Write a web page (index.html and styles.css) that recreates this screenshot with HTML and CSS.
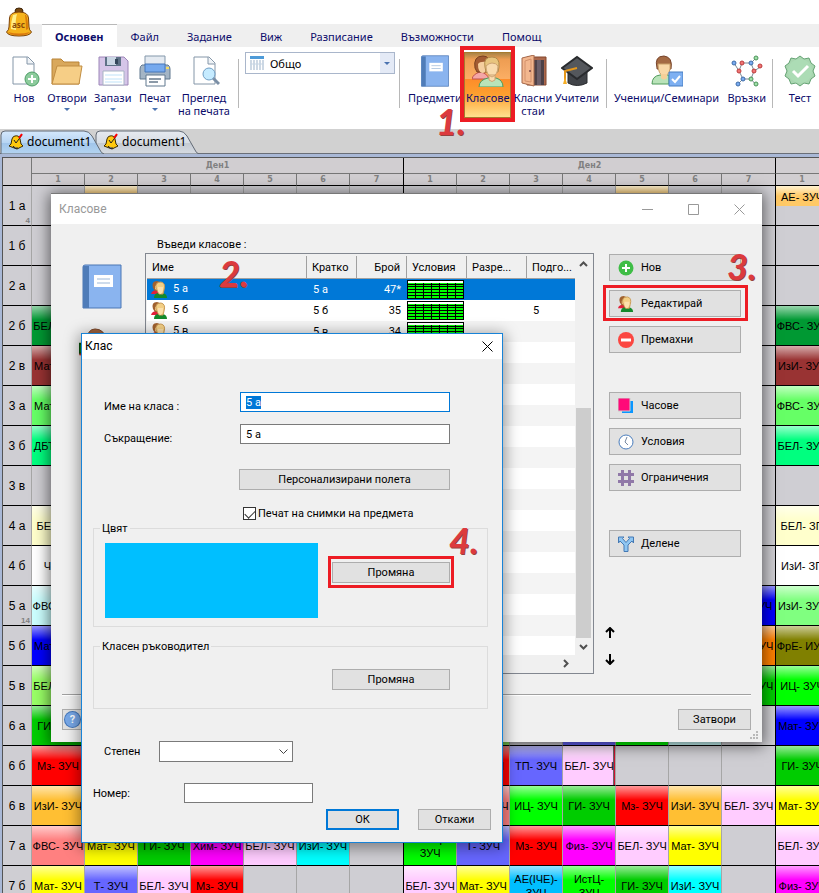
FILE: index.html
```html
<!DOCTYPE html>
<html lang="bg">
<head>
<meta charset="UTF-8" />
<meta name="viewport" content="width=device-width, initial-scale=1" />
<title>Класове</title>
<link rel="stylesheet" href="styles.css">
</head>
<body>

<!-- Shared icons -->
<svg class="sprite" aria-hidden="true">
  <symbol id="bell" viewBox="0 0 26 30">
    <ellipse cx="13" cy="4" rx="4" ry="3" fill="#7a4a12" stroke="#3d2408"/>
    <path d="M3.500 11Q4 5 13 5Q22 5 22.500 11L23 20Q23 23 25.500 25Q24 29 13 29Q2 29 .5 25Q3 23 3 20Z" fill="#f6b31c" stroke="#7d4107"/>
    <path d="M7 8Q5 14 5 22L10 23Q9 13 11 7Z" fill="#fff08a"/>
    <path d="M19 8Q20 15 20 23L22 22Q22 12 20 8Z" fill="#d97b08"/>
    <path d="M2 25Q13 28 24 25Q22 28 13 28.500Q4 28 2 25Z" fill="#d9780f"/>
  </symbol>
  <symbol id="bell-small" viewBox="0 0 16 17">
    <path d="M7 3Q11 2 12 6L13 11L15 13L9 16L1 13L3 11L4 6Q5 3 7 3Z" fill="#ffc90e" stroke="#3b2b00"/>
    <path d="M5 13Q7 17 10 15" fill="#777" stroke="#222"/>
    <path d="M6 7L8 10L14 2" fill="none" stroke="#222"/>
    <path d="M11 5L14 1" stroke="#f00" stroke-width="2"/>
  </symbol>
  <symbol id="book" viewBox="0 0 40 45">
    <path d="M1 3Q1 1 3 1H39V44H1Z" fill="#8ab4ef" stroke="#4a76b4"/>
    <path d="M1 2H7V44H1Z" fill="#4f7cb8"/>
    <path d="M12 11H31V23H12Z" fill="#fff"/>
    <path d="M15 15H28M15 19H28" stroke="#9db8d8"/>
  </symbol>
  <symbol id="people" viewBox="0 0 32 32">
    <path d="M0 24Q1 19 8 17Q15 18 17 24Z" fill="#f4a6a6" stroke="#c0504d"/>
    <path d="M3 13Q1 1 11 1Q19 1 18 12L17 17H5Z" fill="#a35c33" stroke="#7a4020"/>
    <path d="M6 9Q8 6 15 7V13Q14 18 10 18Q6 17 6 9Z" fill="#f5cf9f"/>
    <path d="M7 32Q7 25 16 23H24Q31 25 31 32Z" fill="#b9e3b9" stroke="#4f9a5a"/>
    <path d="M13 12Q11 2 20 2Q28 2 27 12L26 17H14Z" fill="#e8c57e" stroke="#b08a4a"/>
    <path d="M14 11Q17 8 20 8Q24 8 26 11Q26 20 20 22Q14 20 14 11ZM17 20H23V25Q20 28 17 25Z" fill="#f9dbae" stroke="#cda271"/>
  </symbol>
  <symbol id="people-small" viewBox="0 0 17 17">
    <path d="M0 13Q1 9 6 9L9 13Z" fill="#e3203a"/>
    <path d="M2 7Q0 0 6 0Q11 1 10 7L8 10H4Z" fill="#a0612f"/>
    <path d="M4 5H9V9Q6 10 4 8Z" fill="#f6c890"/>
    <path d="M3 17Q3 12 8 12H12Q16 13 16 17Z" fill="#148a2c"/>
    <path d="M5 7Q4 1 10 1Q15 2 13 9L12 13H8Z" fill="#f3cf85" stroke="#c99a55"/>
    <path d="M7 6H12V9Q11 13 9 13Q6 11 7 6Z" fill="#fce0ac"/>
  </symbol>
</svg>

<header class="app-header">
  <div class="title-strip"><svg class="app-bell" aria-hidden="true"><use href="#bell"/></svg><span class="bell-text">asc</span></div>
  <nav class="ribbon-tabs">
    <a class="ribbon-tab active" href="#">Основен</a>
    <a class="ribbon-tab" href="#">Файл</a>
    <a class="ribbon-tab" href="#">Задание</a>
    <a class="ribbon-tab" href="#">Виж</a>
    <a class="ribbon-tab" href="#">Разписание</a>
    <a class="ribbon-tab" href="#">Възможности</a>
    <a class="ribbon-tab" href="#">Помощ</a>
  </nav>

  <div class="ribbon">
    <div class="group group-file">
      <button class="tool" type="button">
        <svg viewBox="0 0 32 32"><path d="M5 2H20L26 8V29H5Z" fill="#fff" stroke="#8496a8"/><path d="M19 2V9H26" fill="#eef2f6" stroke="#8496a8"/><circle cx="24" cy="24" r="7" fill="#8ccb9c" stroke="#4d9d66"/><path d="M24 20V28M20 24H28" stroke="#fff" stroke-width="2"/></svg>
        Нов
      </button>
      <button class="tool drop" type="button">
        <svg viewBox="0 0 32 32"><path d="M1 4H10L13 7H28V29H1Z" fill="#d9a85c" stroke="#b98336"/><path d="M1 29L6 11H31L28 29Z" fill="#f6ce86" stroke="#c18d42"/></svg>
        Отвори
      </button>
      <button class="tool drop" type="button">
        <svg viewBox="0 0 32 32"><path d="M2 2H27L31 6V30H2Z" fill="#d5c5e8" stroke="#9d86b8"/><path d="M8 2H24V11H8Z" fill="#5e7186"/><path d="M10 2H19V10H10Z" fill="#c9d6e4"/><path d="M18 4H21V9H18Z" fill="#34465a"/><path d="M6 16H27V30H6Z" fill="#fff" stroke="#a7b3c4"/><path d="M8 20H25M8 24H25M8 27H25" stroke="#bfe2f8"/></svg>
        Запази
      </button>
      <button class="tool drop" type="button">
        <svg viewBox="0 0 32 32"><path d="M6 1H26V10H6Z" fill="#e4eaf1" stroke="#8397aa"/><path d="M3 10H29Q31 11 31 14V24H1V14Q1 11 3 10Z" fill="#a4b5c5" stroke="#60788f"/><path d="M6 9H26V17H6Z" fill="#75a9ee" stroke="#4677b9"/><path d="M7 20H26V31H7Z" fill="#fff" stroke="#60788f"/><path d="M10 24H22M10 27H19" stroke="#8c9aa8" stroke-width="2"/><path d="M27 13H30" stroke="#f5dd63" stroke-width="2"/></svg>
        Печат
      </button>
      <button class="tool" type="button">
        <svg viewBox="0 0 32 32"><path d="M6 2H21L27 8V29H6Z" fill="#fff" stroke="#8496a8"/><path d="M20 2V9H27" fill="#eef2f6" stroke="#8496a8"/><path d="M25 23L31 29" stroke="#7b8fa6" stroke-width="3"/><circle cx="21" cy="19" r="6" fill="#c5ebff" stroke="#709ec4"/></svg>
        Преглед<br>на печата
      </button>
    </div>

    <div class="group group-view">
      <div class="combo">
        <svg viewBox="0 0 14 14"><path d="M0 0H14V14H0Z" fill="#fff"/><path d="M0 0H14V3H0Z" fill="#4e9bd8"/><path d="M1 4V14M4 4V14M7 4V14M10 4V14M13 4V14" stroke="#9bb1c9"/><path d="M0 8H14" stroke="#c6d5e4"/></svg>
        <select aria-label="Изглед"><option>Общо</option></select>
      </div>
    </div>

    <div class="group group-data">
      <button class="tool" type="button">
        <svg><use href="#book"/></svg>
        Предмети
      </button>
      <button class="tool pressed" type="button">
        <svg><use href="#people"/></svg>
        Класове
      </button>
      <button class="tool" type="button">
        <svg viewBox="0 0 32 32"><path d="M10 2H29V30H10Z" fill="#ab684d" stroke="#84462d"/><path d="M13 5H27V30H13Z" fill="#4d4148"/><path d="M20 5H24V30H20Z" fill="#6b5e69"/><path d="M5 3L17 0V31L5 28Z" fill="#f3b78f" stroke="#a5684a"/><path d="M8 6L14 4V27L8 26Z" fill="none" stroke="#d2916c"/><circle cx="13" cy="16" r="1" fill="#744"/></svg>
        Класни<br>стаи
      </button>
      <button class="tool" type="button">
        <svg viewBox="0 0 32 32"><path d="M7 14H26V28Q16 33 7 28Z" fill="#414449" stroke="#292b2e"/><path d="M1 13L16 2L31 13L16 24Z" fill="#54575c" stroke="#292b2e" stroke-width="2"/><path d="M16 13L4 16V25" fill="none" stroke="#e5971b" stroke-width="2"/><path d="M4 22L6 29H2Z" fill="#f5ae27"/></svg>
        Учители
      </button>
    </div>

    <div class="group group-students">
      <button class="tool" type="button">
        <svg viewBox="0 0 32 32"><path d="M1 29Q1 21 9 20H18V29Z" fill="#b9e3b9" stroke="#4f9a5a"/><path d="M6 13Q3 1 13 1Q22 2 20 14H6Z" fill="#a46a43" stroke="#76432a"/><path d="M7 9H19Q20 20 13 21Q7 20 7 9Z" fill="#f9d8a7" stroke="#c9a06b"/><path d="M10 19H16V23Q13 26 10 23Z" fill="#f5cf98"/><path d="M18 17H32V31H18Z" fill="#7eb0f2" stroke="#477dc1"/><path d="M21 24L24 27L29 21" fill="none" stroke="#fff" stroke-width="2"/></svg>
        Ученици/Семинари
      </button>
      <button class="tool" type="button">
        <svg viewBox="0 0 32 32"><path d="M3 8L8 16L12 24L6 30M8 16L11 8H20L25 3M20 8L23 16L31 11M12 24H20L25 30M23 16L20 24" fill="none" stroke="#7c8995"/><g fill="#78aaf0" stroke="#3e6ca8"><circle cx="3" cy="8" r="2"/><circle cx="12" cy="24" r="2"/><circle cx="7" cy="29" r="2"/><circle cx="20" cy="8" r="2"/></g><g fill="#ef7474" stroke="#bd3c3c"><circle cx="11" cy="8" r="2"/><circle cx="8" cy="16" r="2"/><circle cx="23" cy="16" r="2"/><circle cx="29" cy="11" r="2"/></g><g fill="#9ee0a8" stroke="#4c9259"><circle cx="25" cy="3" r="2"/><circle cx="20" cy="24" r="2"/><circle cx="25" cy="29" r="2"/></g></svg>
        Връзки
      </button>
    </div>

    <div class="group group-test">
      <button class="tool" type="button">
        <svg viewBox="0 0 32 32"><path d="M16 1L20 4L25 3L27 8L31 11L29 16L31 21L27 24L25 29L20 28L16 31L12 28L7 29L5 24L1 21L3 16L1 11L5 8L7 3L12 4Z" fill="#a9d6b0" stroke="#65a374"/><circle cx="16" cy="16" r="12" fill="#acdcb5"/><path d="M9 16L14 21L24 11" fill="none" stroke="#fff" stroke-width="3"/></svg>
        Тест
      </button>
    </div>
  </div>

  <nav class="doc-tabs">
    <a class="doc-tab current" href="#">
      <svg class="tab-shape" viewBox="0 0 104 24"><defs><linearGradient id="tabBlue" x2="0" y2="1"><stop offset="0" stop-color="#d4e8fc"/><stop offset=".5" stop-color="#b7d5f3"/><stop offset=".5" stop-color="#9fc4ea"/><stop offset="1" stop-color="#b4d4f0"/></linearGradient></defs><path d="M1 24V5Q1 1 5 1H84Q89 1 92 6L100 20Q101 23 104 24Z" fill="url(#tabBlue)" stroke="#626a75"/></svg>
      <svg class="tab-bell"><use href="#bell-small"/></svg>
      <span>document1</span>
    </a>
    <a class="doc-tab" href="#">
      <svg class="tab-shape" viewBox="0 0 104 24"><defs><linearGradient id="tabGrey" x2="0" y2="1"><stop offset="0" stop-color="#e6eaf0"/><stop offset=".5" stop-color="#d8dde4"/><stop offset=".5" stop-color="#c3c9d1"/><stop offset="1" stop-color="#d7dce3"/></linearGradient></defs><path d="M1 24V5Q1 1 5 1H84Q89 1 92 6L100 20Q101 23 104 24Z" fill="url(#tabGrey)" stroke="#626a75"/></svg>
      <svg class="tab-bell"><use href="#bell-small"/></svg>
      <span>document1</span>
    </a>
  </nav>
</header>

<main class="workspace">
  <table class="timetable">
    <colgroup>
      <col class="c-head">
      <col class="c-hour" span="6"><col class="c-last">
      <col class="c-hour" span="6"><col class="c-last">
      <col class="c-hour">
    </colgroup>
    <thead>
      <tr class="days"><th rowspan="2"></th><th colspan="7">Ден1</th><th class="day" colspan="7">Ден2</th><th class="day"></th></tr>
      <tr class="hours"><th>1</th><th>2</th><th>3</th><th>4</th><th>5</th><th>6</th><th>7</th><th class="day">1</th><th>2</th><th>3</th><th>4</th><th>5</th><th>6</th><th>7</th><th class="day">1</th></tr>
    </thead>
    <tbody>
      <tr><th>1 а<small>4</small></th><td></td><td><div class="half">АЕ- ЗУЧ</div></td><td></td><td></td><td></td><td></td><td></td><td class="day"></td><td></td><td></td><td></td><td><div class="half">АЕ- ЗУЧ</div></td><td></td><td></td><td class="day"><div class="half">АЕ- ЗУЧ</div></td></tr>
      <tr><th>1 б</th><td></td><td colspan="12"></td><td></td><td class="day"></td></tr>
      <tr><th>2 а</th><td></td><td colspan="12"></td><td></td><td class="day"></td></tr>
      <tr><th>2 б</th><td class="s forest">БЕЛ- ЗУЧ</td><td colspan="12"></td><td></td><td class="s forest day">ФВС- ЗУЧ</td></tr>
      <tr><th>2 в</th><td class="s brown">Мат- ЗУЧ</td><td colspan="12"></td><td></td><td class="s brown day">ИзИ- ЗУЧ</td></tr>
      <tr><th>3 а</th><td class="s grass">Мат- ЗУЧ</td><td colspan="12"></td><td></td><td class="s grass day">ФВС- ЗУЧ</td></tr>
      <tr><th>3 б</th><td class="s mint">ДБТ- ЗУЧ</td><td colspan="12"></td><td></td><td class="s mint day">БЕЛ- ЗУЧ</td></tr>
      <tr><th>3 в</th><td></td><td colspan="12"></td><td></td><td class="day"></td></tr>
      <tr><th>4 а</th><td class="s cream">БЕЛ- ЗП</td><td colspan="12"></td><td></td><td class="s cream day">БЕЛ- ЗП</td></tr>
      <tr><th>4 б</th><td class="s white">ЧП- З</td><td colspan="12"></td><td></td><td class="s white day">ИзИ- ЗП</td></tr>
      <tr><th>5 а<small>14</small></th><td class="s ice">ФВС- ЗУЧ</td><td colspan="12"></td><td class="s blue">Мат- ЗУЧ</td><td class="s lightgreen day">ИзИ- ЗУЧ</td></tr>
      <tr><th>5 б</th><td class="s blue">Мат- ЗУЧ</td><td colspan="12"></td><td class="s orange">БЕЛ- ЗУЧ</td><td class="s olive day">ФрЕ- ИУЧ</td></tr>
      <tr><th>5 в</th><td class="s lime">БЕЛ- ЗУЧ</td><td colspan="12"></td><td class="s green">БЕЛ- ЗУЧ</td><td class="s neon day">ИЦ- ЗУЧ</td></tr>
      <tr><th>6 а</th><td class="s green">ГИ- ЗУЧ</td><td class="s green" colspan="6"></td><td class="s lime day"></td><td class="s lime"></td><td></td><td class="s violet"></td><td class="s neon"></td><td class="s ice"></td><td></td><td class="s blue day">Мат- ЗУЧ</td></tr>
      <tr><th>6 б</th><td class="s red">Мз- ЗУЧ</td><td></td><td></td><td></td><td></td><td></td><td></td><td class="day"></td><td class="s red">Мз- ЗУЧ</td><td class="s violet">ТП- ЗУЧ</td><td class="s pink marked">БЕЛ- ЗУЧ</td><td></td><td></td><td></td><td class="s green day">ГИ- ЗУЧ</td></tr>
      <tr><th>6 в</th><td class="s amber">ИзИ- ЗУЧ</td><td></td><td></td><td></td><td></td><td></td><td></td><td class="day"></td><td class="s salmon">ФВС- ЗУЧ</td><td class="s neon">ИЦ- ЗУЧ</td><td class="s green">ГИ- ЗУЧ</td><td class="s red">Мз- ЗУЧ</td><td class="s amber">ИзИ- ЗУЧ</td><td class="s pink">БЕЛ- ЗУЧ</td><td class="s yellow day">Мат- ЗУЧ</td></tr>
      <tr><th>7 а</th><td class="s salmon">ФВС- ЗУЧ</td><td class="s yellow">Мат- ЗУЧ</td><td class="s green">ГИ- ЗУЧ</td><td class="s magenta">Хим- ЗУЧ</td><td class="s pink">БЕЛ- ЗУЧ</td><td class="s cyan">ИзИ- ЗУЧ</td><td></td><td class="s neon day">ИстЦ-<br>ЗУЧ</td><td class="s violet">Т- ЗУЧ</td><td class="s red">Мз- ЗУЧ</td><td class="s magenta">Физ- ЗУЧ</td><td class="s pink">БЕЛ- ЗУЧ</td><td class="s yellow">Мат- ЗУЧ</td><td></td><td class="s pink day">БЕЛ- ЗУЧ</td></tr>
      <tr><th>7 б</th><td class="s yellow">Мат- ЗУЧ</td><td class="s violet">Т- ЗУЧ</td><td class="s pink">БЕЛ- ЗУЧ</td><td class="s red">Мз- ЗУЧ</td><td></td><td></td><td></td><td class="s pink day">БЕЛ- ЗУЧ</td><td class="s yellow">Мат- ЗУЧ</td><td class="s sky">АЕ(ІЧЕ)-<br>ЗУЧ</td><td class="s neon">ИстЦ-<br>ЗУЧ</td><td class="s green">ГИ- ЗУЧ</td><td class="s cyan">ИзИ- ЗУЧ</td><td></td><td class="s magenta day">Физ- ЗУЧ</td></tr>
    </tbody>
  </table>
</main>

<!-- Classes window -->
<section class="window classes-window" aria-label="Класове">
  <div class="window-title">
    <span>Класове</span>
    <div class="window-controls">
      <button type="button" aria-label="Минимизирай"><svg viewBox="0 0 11 11"><path d="M0 5.500H11"/></svg></button>
      <button type="button" aria-label="Максимизирай"><svg viewBox="0 0 11 11"><path d="M.5 .5H10.500V10.500H.5Z"/></svg></button>
      <button type="button" aria-label="Затвори прозореца"><svg viewBox="0 0 11 11"><path d="M.5 .5L10.500 10.500M10.500 .5L.5 10.500"/></svg></button>
    </div>
  </div>

  <div class="window-body">
    <aside class="pictures">
      <svg class="big-book"><use href="#book"/></svg>
      <svg class="big-people" viewBox="0 0 40 46"><path d="M7 14Q8 1 16 1Q26 1 28 14Z" fill="#a06440" stroke="#7a4628"/><path d="M0 16H16V26H0Z" fill="#10a01c" stroke="#064f0a" stroke-width="2"/><path d="M0 27H16" stroke="#c22" stroke-width="2"/></svg>
    </aside>

    <div class="classes-list">
      <p class="list-label">Въведи класове :</p>
      <div class="list-box">
        <div class="list-rows">
          <table class="class-table">
            <colgroup><col class="w-name"><col class="w-short"><col class="w-count"><col class="w-cond"><col class="w-room"><col class="w-prep"></colgroup>
            <thead><tr><th>Име</th><th>Кратко</th><th class="num">Брой</th><th>Условия</th><th>Разре...</th><th>Подго...</th></tr></thead>
            <tbody>
              <tr class="selected"><td><svg><use href="#people-small"/></svg>5 а</td><td>5 а</td><td class="num">47*</td><td class="cond"><div class="mini-grid"></div></td><td></td><td></td></tr>
              <tr><td><svg><use href="#people-small"/></svg>5 б</td><td>5 б</td><td class="num">35</td><td class="cond"><div class="mini-grid"></div></td><td></td><td>5</td></tr>
              <tr><td><svg><use href="#people-small"/></svg>5 в</td><td>5 в</td><td class="num">34</td><td class="cond"><div class="mini-grid"></div></td><td></td><td></td></tr>
            </tbody>
          </table>
        </div>
        <div class="scroll-y">
          <svg viewBox="0 0 9 6"><path d="M1 5L4.500 1.500L8 5"/></svg>
          <div class="scroll-thumb"></div>
          <svg viewBox="0 0 9 6"><path d="M1 1L4.500 4.500L8 1"/></svg>
        </div>
        <div class="scroll-x"><svg viewBox="0 0 6 9"><path d="M1 1L4.500 4.500L1 8"/></svg></div>
      </div>
    </div>

    <div class="actions">
      <div class="action-group">
        <button class="btn icon-btn" type="button"><svg viewBox="0 0 16 16"><circle cx="8" cy="8" r="7.500" fill="#3fbd46"/><path d="M8 4V12M4 8H12" stroke="#fff" stroke-width="2"/></svg>Нов</button>
        <div class="marked-btn edit-mark"><button class="btn icon-btn" type="button"><svg><use href="#people-small"/></svg>Редактирай</button></div>
        <button class="btn icon-btn" type="button"><svg viewBox="0 0 16 16"><circle cx="8" cy="8" r="8" fill="#fb4741"/><path d="M3 8H13" stroke="#fff" stroke-width="3"/></svg>Премахни</button>
      </div>
      <div class="action-group">
        <button class="btn icon-btn" type="button"><svg viewBox="0 0 16 16"><path d="M4 3H15V15H4Z" fill="#0a96ff"/><path d="M0 0H12V13H0Z" fill="#ff0a78" stroke="#ccc"/></svg>Часове</button>
        <button class="btn icon-btn" type="button"><svg viewBox="0 0 16 16"><circle cx="8" cy="8" r="7" fill="#fff" stroke="#4a7dbd"/><path d="M9 3L7 8L10 11" fill="none" stroke="#7788a0"/></svg>Условия</button>
        <button class="btn icon-btn" type="button"><svg viewBox="0 0 16 16"><path d="M0 4.500H16M0 11.500H16M4.500 0V16M11.500 0V16" stroke="#9078a8" stroke-width="3"/></svg>Ограничения</button>
      </div>
      <div class="action-group">
        <button class="btn icon-btn" type="button"><svg viewBox="0 0 16 16"><path d="M.5 1H6L4.500 2.500L8 6.500L11.500 2.500L10 1H15.500V7L14 5L10 9V15.500H6V9L2 5L.5 7Z" fill="#8fc6f2" stroke="#4479b4"/></svg>Делене</button>
      </div>
      <div class="order">
        <button type="button" aria-label="Нагоре"><svg viewBox="0 0 10 11"><path d="M5 11V1M1 5L5 1L9 5"/></svg></button>
        <button type="button" aria-label="Надолу"><svg viewBox="0 0 10 11"><path d="M5 0V10M1 6L5 10L9 6"/></svg></button>
      </div>
    </div>
  </div>

  <div class="window-footer">
    <button class="btn help-btn" type="button" aria-label="Помощ"><span>?</span></button>
    <button class="btn small-btn" type="button">Затвори</button>
  </div>
  <svg class="grip" viewBox="0 0 8 8"><path d="M6 0H8V2H6ZM3 3H5V5H3ZM6 3H8V5H6ZM0 6H2V8H0ZM3 6H5V8H3ZM6 6H8V8H6Z" fill="#b8b8b8"/></svg>
</section>

<!-- Edit class dialog -->
<form class="window class-dialog" aria-label="Клас">
  <div class="dialog-title">
    <span>Клас</span>
    <button type="button" aria-label="Затвори"><svg viewBox="0 0 11 11"><path d="M.5 .5L10.500 10.500M10.500 .5L.5 10.500"/></svg></button>
  </div>

  <div class="dialog-body">
    <div class="fields">
      <label for="className">Име на класа :</label>
      <input type="text" id="className" value="5 а" autocomplete="off" />
      <label for="classShort">Съкращение:</label>
      <input type="text" id="classShort" value="5 а" autocomplete="off" />
    </div>
    <div class="extras">
      <button class="btn" type="button">Персонализирани полета</button>
      <label class="check"><input type="checkbox" checked />Печат на снимки на предмета</label>
    </div>

    <fieldset class="color-set">
      <legend>Цвят</legend>
      <div class="swatch"></div>
      <div class="marked-btn color-mark"><button class="btn" type="button">Промяна</button></div>
    </fieldset>

    <fieldset class="teacher-set">
      <legend>Класен ръководител</legend>
      <button class="btn" type="button">Промяна</button>
    </fieldset>

    <div class="line grade-line">
      <label for="grade">Степен</label>
      <div class="select-box">
        <select id="grade"><option></option></select>
        <svg viewBox="0 0 9 6"><path d="M.5 .5L4.500 4.500L8.500 .5"/></svg>
      </div>
    </div>
    <div class="line number-line">
      <label for="number">Номер:</label>
      <input type="text" id="number" />
    </div>

    <div class="dialog-buttons">
      <button class="btn small-btn default" type="submit">ОК</button>
      <button class="btn small-btn" type="button">Откажи</button>
    </div>
  </div>
</form>

<!-- Step marks -->
<div class="frame frame-classes"></div>
<span class="step step-1">1.</span>
<span class="step step-2">2.</span>
<span class="step step-3">3.</span>
<span class="step step-4">4.</span>

<script>
  document.getElementById('className').select();
</script>

</body>
</html>
```

FILE: styles.css
```css
* {
  box-sizing: border-box;
}

body {
  position: relative;
  margin: 0;
  height: 100vh;
  overflow: hidden;
  display: flex;
  flex-direction: column;
  background: #fff;
  color: #000;
  font-family: Roboto, "Noto Sans", sans-serif;
  font-size: 11px;
  line-height: 15px;
}

button, input, select {
  font: inherit;
  color: inherit;
  padding: 0;
}

button {
  border: none;
  background: none;
}

a {
  color: inherit;
  text-decoration: none;
}

.sprite {
  position: absolute;
  width: 0;
  height: 0;
}

/* Ribbon */
.app-header {
  flex: none;
  color: #0c0c6b;
  font-family: "Noto Sans", "Open Sans", sans-serif;
}

.title-strip {
  position: relative;
  height: 24px;
}

.app-bell {
  position: absolute;
  left: 6px;
  top: 7px;
  width: 26px;
  height: 30px;
}

.bell-text {
  position: absolute;
  left: 12px;
  top: 20px;
  font-size: 8px;
  line-height: 10px;
  font-weight: bold;
  color: #8a4a08;
}

.ribbon-tabs {
  display: flex;
  height: 23px;
  padding-left: 42px;
  background: #efefef;
}

.ribbon-tab {
  padding: 0 14px;
  line-height: 26px;
}

.ribbon-tab.active {
  padding: 0 13px;
  background: #fff;
  border-top: 1px solid #b9b9b9;
  font-weight: bold;
  line-height: 24px;
}

.ribbon {
  display: flex;
  height: 82px;
}

.group {
  position: relative;
  flex: none;
  display: flex;
  align-items: flex-start;
  justify-content: space-between;
  padding: 5px 8px 7px;
}

.group + .group::before {
  content: "";
  position: absolute;
  left: 0;
  top: 12px;
  height: 49px;
  border-left: 1px solid #b8b8b8;
}

.group-file { width: 238px; }
.group-view { width: 161px; padding: 5px 4px 0 7px; }
.group-data { width: 207px; padding: 5px 7px 0 9px; }
.group-students { width: 166px; padding-right: 6px; }
.group-test { width: 56px; justify-content: center; }

.tool {
  display: flex;
  flex-direction: column;
  align-items: center;
  height: 66px;
  padding-top: 3px;
  line-height: 13px;
  white-space: nowrap;
}

.tool svg {
  width: 32px;
  height: 32px;
  margin-bottom: 4px;
}

.tool.drop::after {
  content: "";
  margin-top: 4px;
  border: 3px solid transparent;
  border-top-color: #4a73b0;
}

.tool.pressed {
  min-width: 47px;
  border: 1px solid #a77a2e;
  padding-top: 2px;
  background: linear-gradient(#a98446, #ee9d52 10%, #fbae64 40%, #fd8c2a 41%, #fda02f 65%, #ffe08e);
}

.combo {
  display: flex;
  align-items: center;
  position: relative;
  width: 100%;
  height: 22px;
  border: 1px solid #a9b6cb;
}

.combo svg {
  position: absolute;
  left: 4px;
  width: 14px;
  height: 14px;
  pointer-events: none;
}

.combo select {
  width: 100%;
  height: 20px;
  padding-left: 24px;
  border: none;
  appearance: none;
  background: linear-gradient(#e4eaf6, #e4eaf6) right / 14px 100% no-repeat #fff;
  color: #000;
}

.combo::after {
  content: "";
  position: absolute;
  right: 4px;
  top: 9px;
  border: 3px solid transparent;
  border-top-color: #4a73b0;
}

.doc-tabs {
  display: flex;
  height: 28px;
  background: #d1d1d1;
  color: #000;
  font-size: 12px;
  box-shadow: inset 0 -3px #a9b8d6, inset 0 -4px #6a6f78;
}

.doc-tab {
  position: relative;
  z-index: 1;
  width: 95px;
  height: 25px;
  padding-left: 27px;
  line-height: 26px;
}

.doc-tab.current {
  z-index: 2;
}

.doc-tab span {
  position: relative;
}

.tab-shape {
  position: absolute;
  left: 0;
  top: 1px;
  width: 104px;
  height: 24px;
}

.tab-bell {
  position: absolute;
  left: 8px;
  top: 4px;
  width: 16px;
  height: 17px;
}

/* Timetable */
.workspace {
  flex: 1;
  min-height: 0;
  overflow: hidden;
  border-left: 2px solid #a9b8d6;
  background: #cfced3;
}

.timetable {
  table-layout: fixed;
  width: 826px;
  border-spacing: 0;
  border-left: 1px solid #555;
  border-top: 1px solid #555;
  font-family: "Liberation Sans", Arial, sans-serif;
  font-size: 12px;
  line-height: 14px;
}

.c-head { width: 28px; }
.c-hour { width: 53px; }
.c-last { width: 54px; }

.timetable th,
.timetable td {
  padding: 0;
  overflow: hidden;
  text-align: center;
  white-space: nowrap;
}

.timetable td {
  height: 40px;
  border-left: 1px solid #a6a6a6;
  border-bottom: 1px solid #000;
  font-size: 11px;
}

.timetable tbody th {
  position: relative;
  border-bottom: 1px solid #000;
  font-weight: normal;
}

.timetable small {
  position: absolute;
  right: 1px;
  bottom: 0;
  font-size: 8px;
  line-height: 8px;
  font-weight: bold;
  color: #808080;
}

.timetable thead th {
  height: 12px;
  border-left: 1px solid #777;
  border-bottom: 1px solid #000;
  background: #d1ced1;
  font-family: "DejaVu Sans", sans-serif;
  font-size: 8px;
  line-height: 10px;
  font-weight: bold;
  color: #808080;
}

.timetable .days th {
  height: 16px;
  border-bottom-color: #777;
}

.timetable thead th:first-child[rowspan] {
  border-left: none;
  border-bottom-color: #000;
}

.timetable .day,
.timetable thead .day {
  border-left-color: #000;
}

.half {
  height: 20px;
  margin-bottom: 19px;
  background: linear-gradient(#fff2d0, #ffc966 10px);
  line-height: 22px;
}

.s {
  background-image: linear-gradient(rgba(255, 255, 255, 0.6), rgba(255, 255, 255, 0) 14px);
}

.forest { background-color: #009933; }
.brown { background-color: #993333; }
.grass { background-color: #66ff66; }
.mint { background-color: #00ff7f; }
.cream { background-color: #ffffcc; }
.white { background-color: #ffffff; }
.ice { background-color: #ccffff; }
.blue { background-color: #0000ff; }
.lime { background-color: #99ff66; }
.green { background-color: #00cc00; }
.neon { background-color: #00ff00; }
.lightgreen { background-color: #80ff80; }
.orange { background-color: #ff8000; }
.olive { background-color: #808000; }
.red { background-color: #ff0000; }
.violet { background-color: #6666ff; }
.pink { background-color: #ffccff; }
.amber { background-color: #ffbf33; }
.salmon { background-color: #ff8080; }
.yellow { background-color: #ffff00; }
.magenta { background-color: #ff00ff; }
.cyan { background-color: #00ffff; }
.sky { background-color: #00bfff; }

.marked {
  box-shadow: inset -1px 0 #d01030, inset -2px 0 #666;
}

/* Windows */
.window {
  position: absolute;
  background: #f0f0f0;
}

.window button svg {
  display: block;
}

.btn {
  display: flex;
  align-items: center;
  justify-content: center;
  height: 21px;
  border: 1px solid #adadad;
  background: #e1e1e1;
}

.small-btn {
  width: 73px;
}

.classes-window {
  left: 51px;
  top: 193px;
  width: 711px;
  border-top: 1px solid #777;
  box-shadow: 0 2px 14px 2px rgba(0, 0, 0, 0.55);
}

.window-title {
  display: flex;
  align-items: center;
  justify-content: space-between;
  height: 30px;
  padding-left: 8px;
  background: #fff;
  color: #999;
  font-size: 12px;
}

.window-controls {
  display: flex;
  gap: 35px;
  padding-right: 17px;
}

.window-controls svg,
.dialog-title svg {
  width: 11px;
  height: 11px;
  fill: none;
  stroke: #999;
}

.window-body {
  display: flex;
}

.pictures {
  flex: none;
  width: 94px;
  padding: 40px 0 0 31px;
}

.pictures svg {
  display: block;
  width: 40px;
  height: 45px;
}

.pictures .big-people {
  margin: 19px 0 0 -3px;
}

.classes-list {
  flex: 1;
  min-width: 0;
}

.list-label {
  margin: 0;
  padding: 13px 0 1px 12px;
}

.list-box {
  display: grid;
  grid-template-columns: 1fr 17px;
  grid-template-rows: 1fr 17px;
  height: 421px;
  padding: 2px 1px 1px 1px;
  border: 1px solid #828790;
}

.list-rows {
  overflow: hidden;
  background: linear-gradient(#fff 50%, #f4f4f4 50%) 0 2px / 100% 42px;
}

.class-table {
  table-layout: fixed;
  width: 100%;
  border-spacing: 0;
}

.w-name { width: 160px; }
.w-short { width: 50px; }
.w-count { width: 50px; }
.w-cond { width: 60px; }
.w-room { width: 60px; }
.w-prep { width: auto; }

.class-table th {
  height: 23px;
  padding: 0 0 0 5px;
  border-right: 1px solid #a0a0a0;
  border-bottom: 1px solid #a0a0a0;
  background: #f0f0f0;
  font-weight: normal;
  text-align: left;
  white-space: nowrap;
}

.class-table th:last-child {
  border-right: none;
}

.class-table td {
  height: 21px;
  padding: 0 0 0 6px;
  white-space: nowrap;
}

.class-table td:first-child {
  padding-left: 4px;
}

.class-table td svg {
  width: 17px;
  height: 17px;
  margin-right: 5px;
  vertical-align: middle;
}

.class-table .num {
  padding: 0 6px 0 0;
  text-align: right;
}

.class-table .cond {
  padding: 0;
}

.class-table .selected td {
  background: #0078d7;
  color: #fff;
}

.mini-grid {
  width: 57px;
  height: 19px;
  border: 1px solid #000;
  background:
    linear-gradient(#fff, #fff) 0 0 / 100% 2px no-repeat,
    repeating-linear-gradient(90deg, transparent 0 7px, #000 7px 8px),
    repeating-linear-gradient(#0f0 0 2px, #000 2px 3px) 0 3px;
}

.mini-grid::before {
  content: "";
  display: block;
  height: 3px;
  border-bottom: 1px solid #000;
}

.scroll-y {
  display: flex;
  flex-direction: column;
  align-items: center;
  justify-content: space-between;
  padding: 5px 0;
}

.scroll-y svg {
  width: 9px;
  height: 6px;
}

.scroll-thumb {
  width: 15px;
  height: 230px;
  margin-top: auto;
  margin-bottom: 6px;
  background: #cdcdcd;
}

.scroll-x {
  display: flex;
  align-items: center;
  justify-content: flex-end;
  padding-right: 6px;
}

.scroll-x svg {
  width: 6px;
  height: 9px;
}

.scroll-x svg,
.scroll-y svg {
  fill: none;
  stroke: #505050;
  stroke-width: 2;
}

.actions {
  flex: none;
  display: flex;
  flex-direction: column;
  padding: 30px 21px 0 15px;
}

.action-group {
  display: flex;
  flex-direction: column;
  gap: 9px;
  width: 132px;
  margin-bottom: 39px;
}

.icon-btn {
  justify-content: flex-start;
  width: 100%;
  height: 27px;
  padding-left: 8px;
}

.icon-btn svg {
  width: 16px;
  height: 16px;
  margin-right: 7px;
}

.marked-btn {
  position: relative;
}

.marked-btn::after {
  content: "";
  position: absolute;
  border: 3px solid #ed1c24;
  pointer-events: none;
}

.edit-mark::after {
  inset: -5px -7px -4px -6px;
}

.color-mark::after {
  inset: -6px -4px -5px -4px;
}

.order {
  display: flex;
  flex-direction: column;
  align-items: flex-start;
  gap: 16px;
  margin: 31px 0 0 -4px;
}

.order svg {
  width: 10px;
  height: 11px;
  fill: none;
  stroke: #000;
  stroke-width: 2;
}

.window-footer {
  display: flex;
  justify-content: space-between;
  margin: 20px 11px 0;
  padding: 14px 0 12px;
  border-top: 1px solid #a0a0a0;
  box-shadow: inset 0 1px #fff;
}

.help-btn {
  justify-content: flex-start;
  width: 22px;
  padding-left: 2px;
}

.help-btn span {
  width: 15px;
  height: 15px;
  border-radius: 50%;
  background: #78a8e8;
  box-shadow: 0 0 0 1px #4477bb;
  color: #fff;
  font-weight: bold;
}

.grip {
  position: absolute;
  right: 4px;
  bottom: 3px;
  width: 8px;
  height: 8px;
}

/* Class dialog */
.class-dialog {
  left: 81px;
  top: 333px;
  width: 422px;
  border: 1px solid #1883d7;
  box-shadow: 0 3px 14px 2px rgba(0, 0, 0, 0.4);
}

.dialog-title {
  display: flex;
  align-items: center;
  justify-content: space-between;
  height: 25px;
  padding: 0 9px 0 3px;
  background: #fff;
  font-size: 12px;
}

.dialog-title svg {
  stroke: #000;
}

.dialog-body {
  padding: 33px 14px 12px 11px;
}

.class-dialog input[type="text"],
.select-box select {
  height: 20px;
  padding: 0 5px;
  border: 1px solid #7a7a7a;
  border-radius: 0;
  outline: none;
  background: #fff;
}

.class-dialog input[type="text"]:focus {
  border-color: #0078d7;
}

.class-dialog input::selection {
  background: #0078d7;
  color: #fff;
}

.fields {
  display: grid;
  grid-template-columns: 136px 210px;
  gap: 12px 0;
  padding-left: 11px;
}

.fields label {
  padding-top: 6px;
  line-height: 17px;
  height: 20px;
}

.extras {
  width: 211px;
  margin: 25px 0 0 146px;
}

.extras .btn {
  width: 100%;
}

.check {
  display: flex;
  align-items: center;
  margin: 16px 0 0 4px;
  white-space: nowrap;
}

.check input {
  position: relative;
  appearance: none;
  width: 13px;
  height: 13px;
  margin: 0 2px 0 0;
  border: 1px solid #333;
  background: #fff;
}

.check input:checked::after {
  content: "";
  position: absolute;
  left: 3px;
  top: 0;
  width: 5px;
  height: 9px;
  border: solid #333;
  border-width: 0 1px 1px 0;
  transform: rotate(45deg);
}

.class-dialog fieldset {
  display: grid;
  grid-template-columns: 213px 118px;
  gap: 14px;
  align-items: start;
  min-width: 0;
  margin: 0;
  padding: 7px 11px 8px;
  border: 1px solid #dcdcdc;
}

.class-dialog legend {
  padding: 0 2px;
  margin-left: -5px;
}

.class-dialog fieldset .btn {
  grid-column: 2;
  width: 118px;
}

.swatch {
  height: 75px;
  background: #00bfff;
}

.color-mark {
  margin-top: 19px;
}

.class-dialog .teacher-set {
  margin-top: 12px;
  padding: 15px 11px 18px;
}

.line {
  display: flex;
  align-items: center;
}

.grade-line {
  margin-top: 32px;
  padding-left: 11px;
}

.grade-line label {
  width: 55px;
}

.select-box {
  position: relative;
  width: 134px;
}

.select-box select {
  display: block;
  appearance: none;
  width: 100%;
  height: 21px;
}

.select-box svg {
  position: absolute;
  right: 5px;
  top: 8px;
  width: 9px;
  height: 6px;
  fill: none;
  stroke: #444;
  pointer-events: none;
}

.number-line {
  margin-top: 21px;
}

.number-line label {
  width: 91px;
}

.number-line input {
  width: 129px;
}

.dialog-buttons {
  display: flex;
  justify-content: flex-end;
  gap: 19px;
  margin: 6px -3px 0 0;
}

.btn.default {
  border: 2px solid #0078d7;
}

/* Step marks */
.frame {
  position: absolute;
  border: 4px solid #ed1c24;
  pointer-events: none;
}

.frame-classes {
  left: 460px;
  top: 46px;
  width: 55px;
  height: 76px;
}

.step {
  position: absolute;
  z-index: 3;
  color: #dc3a3e;
  font-family: Lato, sans-serif;
  font-size: 36px;
  line-height: 36px;
  font-weight: bold;
  font-style: italic;
  text-shadow: 1px 1px #96413f;
}

.step-1 { left: 436px; top: 103px; }
.step-2 { left: 219px; top: 255px; }
.step-3 { left: 727px; top: 248px; }
.step-4 { left: 449px; top: 522px; }
```
